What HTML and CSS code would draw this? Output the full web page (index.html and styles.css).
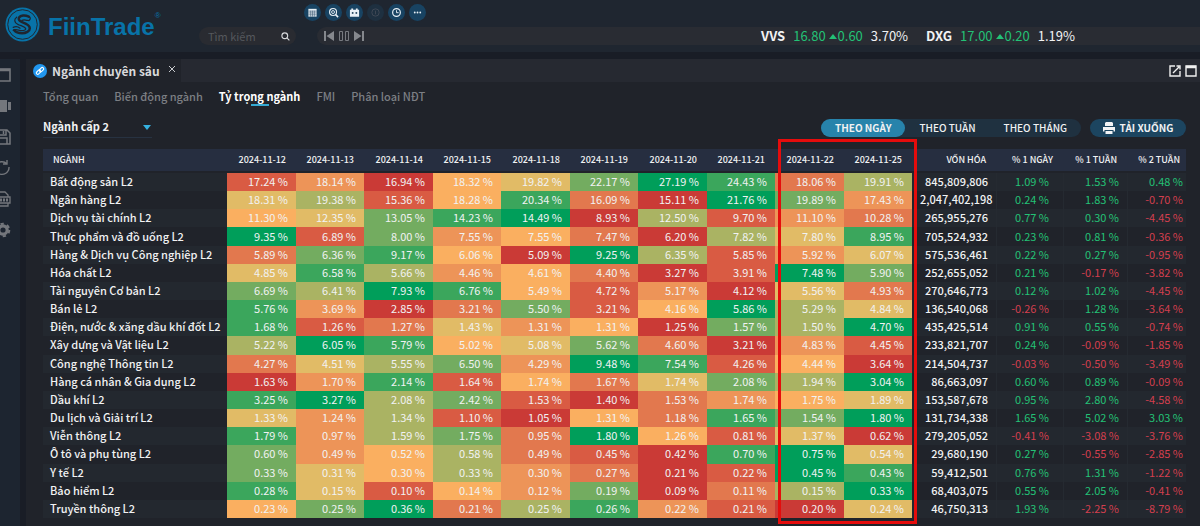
FILE: index.html
```html
<!DOCTYPE html>
<html lang="vi">
<head>
<meta charset="utf-8">
<meta name="viewport" content="width=device-width, initial-scale=1">
<title>FiinTrade</title>
<link rel="stylesheet" href="styles.css">
</head>
<body>
<header class="topbar">
  <a class="brand" href="#" aria-label="FiinTrade">
    <svg class="brand-mark" viewBox="0 0 36 36" aria-hidden="true">
      <circle cx="18" cy="18" r="17.5" fill="#0873a8"/>
      <circle cx="18" cy="18" r="15.2" fill="none" stroke="#1f2630" stroke-width="1"/>
      <g fill="none" stroke="#1f2630" stroke-linecap="round" stroke-linejoin="round">
        <path stroke-width="2.600" d="M24.500 10c-4-2-8.500-1.500-10 .8-1.200 2.200.5 3.900 3.500 5s7.500 2.700 7.500 6-4 5.200-8 5.200-6.500-1-8-3"/>
        <path stroke-width="1.300" d="M12 10.500c-3 2-2.500 5.500 1 7.200s7 2.300 8 4-1 2.600-4 2.600-5.500-2.300-8.500-.3M24.500 10c2.500.8 1.500 3 0 4M8.500 21c2-1 5-.7 7 .8M17.500 13.800c2.500-1.300 4 .2 6 0"/>
      </g>
    </svg>
    <span class="brand-name">FiinTrade</span><span class="brand-reg">®</span>
  </a>
  <div class="top-tools">
    <div class="quick">
      <button class="round" aria-label="Bảng"><svg viewBox="0 0 12 12"><rect x="1.500" y="2" width="9" height="8.500" fill="#e8f0f6"/><path d="M1.500 4.500h9M1.500 6.500h9M1.500 8.500h9M4 4v6.500M6 4v6.500M8 4v6.500" stroke="#33536c" stroke-width=".6"/></svg></button>
      <button class="round" aria-label="Quét"><svg viewBox="0 0 12 12" fill="none" stroke="#e8f0f6"><circle cx="5.500" cy="5.500" r="3.800" stroke-width="1.200"/><path d="M8.300 8.300l2.700 2.700" stroke-width="1.700"/><circle cx="5.500" cy="5.500" r="1.600"/></svg></button>
      <button class="round" aria-label="Lịch"><svg viewBox="0 0 12 12"><path d="M1 3h10v7.500H1zM2.500 1.500h2v2h-2zM7.500 1.500h2v2h-2z" fill="#e8f0f6"/><path d="M3 6.500h2M4 5.500v2M7 6.500h2M8 5.500v2" stroke="#183b57"/></svg></button>
      <button class="round round-off" aria-label="Thông tin"><svg viewBox="0 0 12 12" fill="none" stroke="#414956"><circle cx="6" cy="6" r="4"/><path d="M6 4v4"/></svg></button>
      <button class="round" aria-label="Lịch sử"><svg viewBox="0 0 12 12" fill="none" stroke="#e8f0f6" stroke-width="1.300"><circle cx="6" cy="6" r="4.200"/><path d="M6 3.500V6.200h2.300" stroke-width="1"/></svg></button>
      <button class="round" aria-label="Thêm"><svg viewBox="0 0 12 12" fill="#e8f0f6"><circle cx="3" cy="6" r="1"/><circle cx="6" cy="6" r="1"/><circle cx="9" cy="6" r="1"/></svg></button>
    </div>
    <div class="ticker-row">
      <form class="search">
        <input class="search-input" type="text" placeholder="Tìm kiếm" aria-label="Tìm kiếm">
        <button class="icon-button" type="button" aria-label="Tìm"><svg class="icon-small" viewBox="0 0 10 10" fill="none" stroke="#d5d7da" stroke-width="1.300"><circle cx="4.200" cy="4.200" r="3.200"/><path d="M6.600 6.600l2.700 2.700"/></svg></button>
      </form>
      <div class="ticker">
        <div class="player">
          <button class="icon-button" aria-label="Trước"><svg class="icon-play" viewBox="0 0 10 10" fill="#85888d"><path d="M0 0h2v10H0zM10 0v10L2.500 5z"/></svg></button>
          <button class="icon-button" aria-label="Tạm dừng"><svg class="icon-play" viewBox="0 0 10 10" fill="none" stroke="#777a80"><path d="M.5.5h3v9h-3zM6.500.5h3v9h-3z"/></svg></button>
          <button class="icon-button" aria-label="Sau"><svg class="icon-play" viewBox="0 0 10 10" fill="#85888d"><path d="M8 0h2v10H8zM0 0v10l7.500-5z"/></svg></button>
        </div>
        <div class="quotes">
          <div class="quote"><b>VVS</b><span class="quote-up">16.80 <svg class="up-mark" viewBox="0 0 8 5"><path d="M0 5l4-5 4 5z"/></svg>0.60</span><span>3.70%</span></div>
          <div class="quote"><b>DXG</b><span class="quote-up">17.00 <svg class="up-mark" viewBox="0 0 8 5"><path d="M0 5l4-5 4 5z"/></svg>0.20</span><span>1.19%</span></div>
        </div>
      </div>
    </div>
  </div>
</header>
<div class="workspace">
  <aside class="sidebar">
    <button class="side-button" aria-label="Cửa sổ"><svg viewBox="0 0 18 18" fill="none" stroke="#74777c" stroke-width="1.600"><path d="M1 3h16v12H1z"/><path d="M1 4h16" stroke-width="2.500"/></svg></button>
    <button class="side-button" aria-label="Video"><svg viewBox="0 0 18 18" fill="#74777c"><path d="M1 3h13v12H1zM15 5h3v8h-3z"/></svg></button>
    <button class="side-button" aria-label="Lưu"><svg viewBox="0 0 18 18" fill="none" stroke="#74777c" stroke-width="1.500"><path d="M2 2h12l3 3v11H2zM5 2v5h8V2M5 16v-6h9v6M10.500 3v3"/></svg></button>
    <button class="side-button" aria-label="Làm mới"><svg viewBox="0 0 18 18" fill="none" stroke="#74777c" stroke-width="1.400"><path d="M3 6a7 7 0 0 1 11-1M15 12A7 7 0 0 1 3 12M16 8a7 7 0 0 1-1 4M14 1v4h-4M1 10l2 3 3-2"/></svg></button>
    <button class="side-button" aria-label="In PDF"><svg viewBox="0 0 18 18" fill="none" stroke="#74777c" stroke-width="1.300"><path d="M4 7V2h8l3 3v2M4 13v3h11v-3"/><path d="M2 7h15v6H2z"/><path d="M4 10h11" stroke-width="3" stroke-dasharray="2 1"/></svg></button>
    <button class="side-button" aria-label="Cài đặt"><svg viewBox="0 0 18 18" fill="none" stroke="#74777c"><circle cx="10" cy="9" r="4.200" stroke-width="3.200"/><circle cx="10" cy="9" r="6.300" stroke-width="2" stroke-dasharray="3.300 3.300"/></svg></button>
  </aside>
  <main class="panel">
    <div class="panel-bar">
      <div class="panel-tab">
        <svg class="link-badge" viewBox="0 0 14 14"><circle cx="7" cy="7" r="7" fill="#2196ee"/><g fill="none" stroke="#fff" stroke-width="1.100"><rect x="3" y="6.800" width="5" height="2.800" rx="1.400" transform="rotate(-45 5.500 8.200)"/><rect x="6" y="4.300" width="5" height="2.800" rx="1.400" transform="rotate(-45 8.500 5.700)"/></g></svg>
        <h1 class="panel-title">Ngành chuyên sâu</h1>
        <button class="icon-button close" aria-label="Đóng"><svg class="icon-close" viewBox="0 0 8 8" stroke="#c9cbce"><path d="M1 1l6 6M7 1L1 7"/></svg></button>
      </div>
      <div class="window-tools">
        <button class="icon-button" aria-label="Mở rộng"><svg class="icon-window" viewBox="0 0 12 12" fill="none" stroke="#f0f0f0" stroke-width="1.400"><path d="M6 1H1v10h10V6M4 8l6-6M7.500 1H11v3.500"/></svg></button>
        <button class="icon-button" aria-label="Phóng to"><svg class="icon-window" viewBox="0 0 12 12" fill="none" stroke="#f0f0f0" stroke-width="1.400"><path d="M1 1h10v10H1z"/><path d="M1 2h10" stroke-width="2.500"/></svg></button>
      </div>
    </div>
    <nav class="tabs">
      <a class="tab" href="#">Tổng quan</a>
      <a class="tab" href="#">Biến động ngành</a>
      <a class="tab tab-active" href="#" aria-current="page">Tỷ trọng ngành</a>
      <a class="tab" href="#">FMI</a>
      <a class="tab" href="#">Phân loại NĐT</a>
    </nav>
    <div class="controls">
      <div class="select-wrap">
        <select class="level" aria-label="Cấp ngành"><option>Ngành cấp 2</option></select>
        <svg class="select-arrow" viewBox="0 0 8 5" aria-hidden="true"><path d="M0 0h8L4 5z" fill="#35b1e0"/></svg>
      </div>
      <div class="actions">
        <div class="segments">
          <button class="segment segment-active">THEO NGÀY</button>
          <button class="segment">THEO TUẦN</button>
          <button class="segment">THEO THÁNG</button>
        </div>
        <button class="download"><svg class="icon-print" viewBox="0 0 12 12"><path d="M3 0h6l1 1v3H2V1zM0 5h12v4.500h-1.500V8h-9v1.500H0zM2.500 9h7v3h-7z" fill="#f2f4f6"/></svg>TẢI XUỐNG</button>
      </div>
    </div>
    <div class="table-area">
      <table class="heat">
        <colgroup>
          <col class="col-name">
          <col class="col-odd"><col class="col-even"><col class="col-odd"><col class="col-even"><col class="col-odd"><col class="col-even"><col class="col-odd"><col class="col-even"><col class="col-odd"><col class="col-even">
          <col class="col-cap"><col class="col-change-a"><col class="col-change-b"><col class="col-change-c">
        </colgroup>
        <thead>
          <tr><th scope="col">NGÀNH</th><th scope="col">2024-11-12</th><th scope="col">2024-11-13</th><th scope="col">2024-11-14</th><th scope="col">2024-11-15</th><th scope="col">2024-11-18</th><th scope="col">2024-11-19</th><th scope="col">2024-11-20</th><th scope="col">2024-11-21</th><th scope="col">2024-11-22</th><th scope="col">2024-11-25</th><th scope="col">VỐN HÓA</th><th scope="col">% 1 NGÀY</th><th scope="col">% 1 TUẦN</th><th scope="col">% 2 TUẦN</th></tr>
        </thead>
        <tbody id="sectors"></tbody>
      </table>
      <div class="highlight"></div>
    </div>
  </main>
</div>
<script src="script.js"></script>
</body>
</html>
```
FILE: styles.css
```css
* { box-sizing: border-box; }
body {
  margin: 0;
  min-height: 100vh;
  display: flex;
  flex-direction: column;
  background: #191d26;
  color: #f1f2f3;
  font-family: "Noto Sans CJK SC", "Noto Sans", sans-serif;
  font-size: 11px;
  line-height: 16px;
  overflow: hidden;
}
button, input, select { font: inherit; color: inherit; border: 0; padding: 0; background: none; }
button { cursor: pointer; }
a { color: inherit; text-decoration: none; }
svg { display: block; }

.topbar { display: flex; height: 52px; background: #1f2630; }
.brand { display: flex; width: 199px; padding: 7px 0 0 5px; color: #0873a8; }
.brand-mark { width: 35px; height: 35px; }
.brand-name { margin-left: 8px; font: bold 24px/40px "Liberation Sans", Arial, sans-serif; }
.brand-reg { font: 8px/18px "Liberation Sans", Arial, sans-serif; }
.top-tools { flex: 1; min-width: 0; }
.quick { display: flex; gap: 4px; padding: 4px 0 0 105px; }
.round { display: grid; place-items: center; width: 17px; height: 17px; border-radius: 50%; background: #184362; }
.round svg { width: 11px; height: 11px; }
.round-off { background: #1e3040; }
.ticker-row { display: flex; gap: 21px; margin-top: 6px; }
.icon-button { display: grid; place-items: center; }
.search { display: flex; align-items: center; width: 97px; height: 18px; padding: 0 6px 0 9px; border-radius: 9px; background: #292b31; }
.search-input { flex: 1; min-width: 0; outline: 0; }
.search-input::placeholder { color: #55585d; opacity: 1; }
.icon-small { width: 9px; height: 9px; }
.ticker { flex: 1; display: flex; align-items: center; justify-content: space-between; height: 18px; padding: 0 125px 0 7px; border-radius: 9px 0 0 9px; background: #292c33; }
.player { display: flex; gap: 5px; }
.icon-play { width: 10px; height: 10px; }
.quotes { display: flex; gap: 18px; font-size: 13px; }
.quote { display: flex; gap: 8px; }
.quote-up { color: #23c176; white-space: nowrap; }
.up-mark { display: inline-block; width: 8px; height: 5px; margin: 0 1px 2px 0; fill: #23c176; }

.workspace { flex: 1; display: flex; gap: 6px; padding-top: 7px; }
.sidebar { display: flex; flex-direction: column; align-items: flex-end; gap: 13px; width: 20px; padding: 7px 9px 0 0; background: #1d2530; overflow: hidden; }
.side-button svg { width: 18px; height: 18px; }
.panel { flex: 1; min-width: 0; display: flex; flex-direction: column; background: #20232a; }
.panel-bar { display: flex; justify-content: space-between; height: 23px; background: #262931; }
.panel-tab { display: flex; align-items: center; padding: 0 5px 0 7px; background: #20232a; }
.link-badge { width: 14px; height: 14px; }
.panel-title { margin: 0 8px 0 5px; font-size: 12px; line-height: 20px; font-weight: 700; color: #d9dadc; }
.close { margin-bottom: 4px; }
.icon-close { width: 8px; height: 8px; }
.window-tools { display: flex; gap: 4px; padding-right: 3px; }
.icon-window { width: 12px; height: 12px; }
.tabs { display: flex; gap: 16px; padding: 6px 17px 0; }
.tab { height: 20px; color: #7c7f84; font-weight: 500; white-space: nowrap; }
.tab-active { display: flex; flex-direction: column; align-items: center; color: #fff; font-weight: 700; }
.tab-active::after { content: ""; width: 18px; height: 2px; background: #35a9d2; }
.controls { display: flex; justify-content: space-between; align-items: center; padding: 9px 14px 11px 17px; }
.select-wrap { display: grid; align-items: center; width: 109px; border-bottom: 1px solid #273241; }
.select-wrap > * { grid-area: 1 / 1; }
.level { appearance: none; width: 100%; height: 20px; padding-bottom: 2px; font-weight: 700; outline: 0; }
.level option { background: #20232a; }
.select-arrow { justify-self: end; width: 8px; height: 5px; margin-right: 1px; pointer-events: none; }
.actions { display: flex; gap: 9px; }
.segments { display: flex; border-radius: 9px; background: #1f3140; }
.segment { height: 18px; padding: 0 14px; border-radius: 9px; font-size: 10px; font-weight: 500; }
.segment-active { background: #2783ab; font-weight: 700; }
.download { display: flex; align-items: center; justify-content: center; gap: 5px; width: 96px; border-radius: 9px; background: #1c4560; font-size: 10px; font-weight: 700; }
.icon-print { width: 12px; height: 12px; }

.table-area { position: relative; flex: 1; display: flex; margin: 0 14px 8px 17px; }
.heat { width: 100%; table-layout: fixed; border-collapse: separate; border-spacing: 0; }
.col-name { width: 184px; }
.col-odd { width: 69px; }
.col-even { width: 68px; }
.col-cap { width: 84px; }
.col-change-a { width: 67px; }
.col-change-b { width: 64px; }
.col-change-c { width: 59px; }
.heat th, .heat td { padding: 0 8px 2px; text-align: right; white-space: nowrap; font-variant-numeric: tabular-nums; }
.heat thead th { height: 24px; padding: 0 10px; background: #262e40; border-bottom: 2px solid #20232a; font-size: 9px; font-weight: 500; }
.heat thead th:first-child { text-align: left; }
.heat tbody th { padding-left: 7px; text-align: left; font-weight: 500; }
.heat tbody tr:nth-child(odd) { background: #23282f; }
.heat tbody .cap { font-weight: 500; }
.heat tbody .change { border-left: 1px solid #252a31; }
.heat tbody .change-a { padding-right: 14px; }
.heat tbody .change-c { padding-right: 3px; }
.heat thead th:last-child { padding-right: 6px; }
.gain { color: #23c176; }
.loss { color: #d33f4e; }
.rank-0 { background: #ca3a36; }
.rank-1 { background: #d95b43; }
.rank-2 { background: #e2784e; }
.rank-3 { background: #ed9458; }
.rank-4 { background: #faaf60; }
.rank-5 { background: #e1bb66; }
.rank-6 { background: #aab363; }
.rank-7 { background: #73ac60; }
.rank-8 { background: #3ba65c; }
.rank-9 { background: #009e5a; }
.highlight { position: absolute; top: -10px; bottom: -6px; left: 64.3%; width: 12.2%; border: 3px solid #e50c0c; pointer-events: none; }
```
FILE: script.js
```js
// name | ten daily weights | market cap | changes over 1 day, 1 week, 2 weeks | colour rank per day
const sectors = `
Bất động sản L2|17.24 18.14 16.94 18.32 19.82 22.17 27.19 24.43 18.06 19.91|845,809,806|1.09 1.53 0.48|1304579826
Ngân hàng L2|18.31 19.38 15.36 18.28 20.34 16.09 15.11 21.76 19.89 17.43|2,047,402,198|0.24 1.83 -0.70|5614820973
Dịch vụ tài chính L2|11.30 12.35 13.05 14.23 14.49 8.93 12.50 9.70 11.10 10.28|265,955,276|0.77 0.30 -4.45|4578906132
Thực phẩm và đồ uống L2|9.35 6.89 8.00 7.55 7.55 7.47 6.20 7.82 7.80 8.95|705,524,932|0.23 0.81 -0.36|9173420658
Hàng & Dịch vụ Công nghiệp L2|5.89 6.36 9.17 6.06 5.09 9.25 6.35 5.85 5.92 6.07|575,536,461|0.22 0.27 -0.95|2784096135
Hóa chất L2|4.85 6.58 5.66 4.46 4.61 4.40 3.27 3.91 7.48 5.90|252,655,052|0.21 -0.17 -3.82|5863420197
Tài nguyên Cơ bản L2|6.69 6.41 7.93 6.76 5.49 4.72 5.17 4.12 5.56 4.93|270,646,773|0.12 1.02 -4.45|7698413052
Bán lẻ L2|5.76 3.69 2.85 3.21 5.50 3.21 4.16 5.86 5.29 4.84|136,540,068|-0.26 1.28 -3.64|8302714965
Điện, nước & xăng dầu khí đốt L2|1.68 1.26 1.27 1.43 1.31 1.31 1.25 1.57 1.50 4.70|435,425,514|0.91 0.55 -0.74|8125340769
Xây dựng và Vật liệu L2|5.22 6.05 5.79 5.02 5.08 5.62 4.60 3.21 4.83 4.45|233,821,707|0.24 -0.09 -1.85|6984572031
Công nghệ Thông tin L2|4.27 4.51 5.55 6.50 4.29 9.48 7.54 4.26 4.44 3.64|214,504,737|-0.03 -0.50 -3.49|2567398140
Hàng cá nhân & Gia dụng L2|1.63 1.70 2.14 1.64 1.74 1.67 1.74 2.08 1.94 3.04|86,663,097|0.60 0.89 -0.09|0381425769
Dầu khí L2|3.25 3.27 2.08 2.42 1.53 1.40 1.53 1.74 1.75 1.89|153,587,678|0.95 2.80 -4.58|8967102345
Du lịch và Giải trí L2|1.33 1.24 1.34 1.10 1.05 1.31 1.18 1.65 1.54 1.80|131,734,338|1.65 5.02 3.03|5361042879
Viễn thông L2|1.79 0.97 1.59 1.75 0.95 1.80 1.26 0.81 1.37 0.62|279,205,052|-0.41 -3.08 -3.76|8367294150
Ô tô và phụ tùng L2|0.60 0.49 0.52 0.58 0.49 0.45 0.42 0.70 0.75 0.54|29,680,190|0.27 -0.55 -2.85|7346210895
Y tế L2|0.33 0.31 0.30 0.33 0.30 0.27 0.21 0.22 0.45 0.43|59,412,501|0.76 1.31 -1.22|7546320198
Bảo hiểm L2|0.28 0.15 0.10 0.14 0.12 0.19 0.09 0.11 0.15 0.33|68,403,075|0.55 2.05 -0.41|8514370269
Truyền thông L2|0.23 0.25 0.36 0.21 0.25 0.26 0.22 0.21 0.20 0.24|46,750,313|1.93 -2.25 -8.79|4792683105
`.trim().split("\n");

const body = document.getElementById("sectors");

function addCell(row, tag, text, className) {
  const cell = document.createElement(tag);
  cell.textContent = text;
  if (className) cell.className = className;
  row.append(cell);
  return cell;
}

for (const line of sectors) {
  const [name, days, cap, changes, ranks] = line.split("|");
  const row = document.createElement("tr");
  addCell(row, "th", name).scope = "row";
  days.split(" ").forEach((value, i) => addCell(row, "td", value + " %", "rank-" + ranks[i]));
  addCell(row, "td", cap, "cap");
  changes.split(" ").forEach((value, i) => {
    const tone = value.startsWith("-") ? "loss" : "gain";
    addCell(row, "td", value + " %", "change change-" + "abc"[i] + " " + tone);
  });
  body.append(row);
}
```
